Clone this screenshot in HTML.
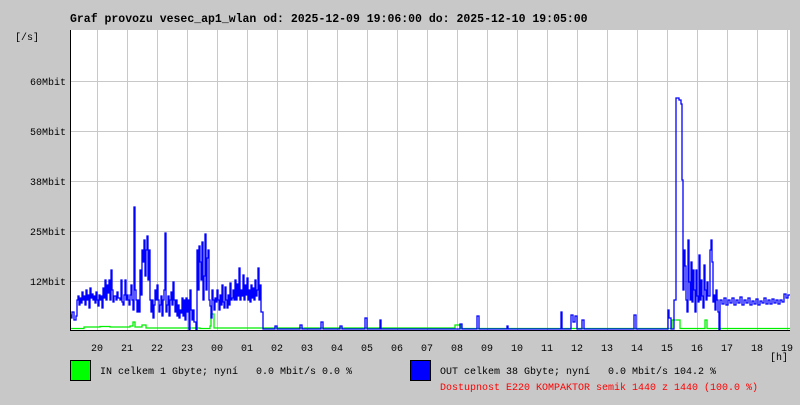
<!DOCTYPE html>
<html><head><meta charset="utf-8"><style>
html,body{margin:0;padding:0;background:#c8c8c8;}
body{width:800px;height:400px;overflow:hidden;}
svg text{font-family:"Liberation Mono",monospace;font-size:10px;fill:#000;}
</style></head><body>
<svg width="800" height="400" xmlns="http://www.w3.org/2000/svg">
<rect width="800" height="400" fill="#c8c8c8"/>
<rect x="70" y="30" width="720" height="300" fill="#fff"/>
<g stroke="#c8c8c8" stroke-width="1">
<line x1="70" y1="81.5" x2="790" y2="81.5"/><line x1="70" y1="131.5" x2="790" y2="131.5"/><line x1="70" y1="181.5" x2="790" y2="181.5"/><line x1="70" y1="231.5" x2="790" y2="231.5"/><line x1="70" y1="281.5" x2="790" y2="281.5"/>
<line x1="97.5" y1="30" x2="97.5" y2="330"/><line x1="127.5" y1="30" x2="127.5" y2="330"/><line x1="157.5" y1="30" x2="157.5" y2="330"/><line x1="187.5" y1="30" x2="187.5" y2="330"/><line x1="217.5" y1="30" x2="217.5" y2="330"/><line x1="247.5" y1="30" x2="247.5" y2="330"/><line x1="277.5" y1="30" x2="277.5" y2="330"/><line x1="307.5" y1="30" x2="307.5" y2="330"/><line x1="337.5" y1="30" x2="337.5" y2="330"/><line x1="367.5" y1="30" x2="367.5" y2="330"/><line x1="397.5" y1="30" x2="397.5" y2="330"/><line x1="427.5" y1="30" x2="427.5" y2="330"/><line x1="457.5" y1="30" x2="457.5" y2="330"/><line x1="487.5" y1="30" x2="487.5" y2="330"/><line x1="517.5" y1="30" x2="517.5" y2="330"/><line x1="547.5" y1="30" x2="547.5" y2="330"/><line x1="577.5" y1="30" x2="577.5" y2="330"/><line x1="607.5" y1="30" x2="607.5" y2="330"/><line x1="637.5" y1="30" x2="637.5" y2="330"/><line x1="667.5" y1="30" x2="667.5" y2="330"/><line x1="697.5" y1="30" x2="697.5" y2="330"/><line x1="727.5" y1="30" x2="727.5" y2="330"/><line x1="757.5" y1="30" x2="757.5" y2="330"/><line x1="787.5" y1="30" x2="787.5" y2="330"/>
</g>
<path fill="none" stroke="#00ee00" stroke-width="1.3" d="M70 328.5 H84 V327 H100 V326.5 H110 V327 H130 V326 H133 V322 H135 V327 H142 V325 H146 V328 H200 V328.5 H210 V326 H211 V314 H214 V328 H455 V325 H461 V328.5 H672 V320 H680 V328.5 H705 V320 H707 V328.5 H790"/>
<path fill="none" stroke="#0000ff" stroke-width="1.3" d="M70 315 H71 V318 H72 V312 H74 V320 H76 V316 H77 V300 H78 V296 H79 V305 H80 V298 H81 V303 H82 V292 H83 V300 H84 V296 H85 V305 H86 V290 H87 V300 H88 V295 H89 V308 H90 V288 H91 V298 H92 V294 H93 V300 H94 V296 H95 V303 H96 V292 H97 V300 H98 V306 H99 V295 H100 V300 H101 V296 H102 V308 H103 V288 H104 V298 H105 V280 H106 V300 H107 V285 H108 V293 H109 V280 H110 V300 H111 V270 H112 V290 H113 V302 H114 V296 H116 V300 H117 V292 H118 V298 H120 V300 H121 V280 H122 V302 H123 V305 H124 V295 H125 V280 H126 V300 H127 V295 H128 V300 H129 V305 H130 V295 H131 V285 H132 V300 H133 V310 H134 V207 H135 V290 H136 V300 H137 V312 H138 V300 H139 V312 H140 V270 H141 V295 H142 V250 H143 V262 H144 V240 H145 V276 H146 V250 H147 V236 H148 V280 H149 V250 H150 V300 H151 V312 H152 V300 H153 V318 H154 V305 H155 V290 H156 V300 H157 V285 H158 V300 H159 V312 H160 V305 H161 V296 H162 V316 H163 V300 H164 V290 H165 V233 H166 V312 H167 V305 H168 V296 H169 V316 H170 V300 H171 V292 H172 V305 H173 V282 H174 V300 H175 V312 H176 V300 H177 V316 H178 V305 H179 V318 H180 V310 H181 V313 H182 V298 H183 V316 H184 V300 H185 V320 H186 V298 H187 V312 H188 V300 H189 V330 H190 V290 H191 V310 H192 V320 H193 V310 H194 V322 H196 V330 H197 V250 H198 V290 H199 V246 H200 V262 H201 V280 H202 V242 H203 V300 H204 V276 H205 V234 H206 V290 H207 V258 H208 V250 H209 V300 H210 V306 H211 V318 H212 V290 H213 V300 H214 V310 H215 V298 H216 V302 H217 V290 H218 V300 H219 V310 H220 V295 H221 V305 H222 V285 H223 V302 H224 V308 H225 V287 H226 V300 H227 V308 H228 V295 H229 V305 H230 V283 H231 V300 H232 V298 H233 V290 H234 V300 H235 V280 H236 V300 H237 V284 H238 V296 H239 V268 H240 V300 H241 V290 H242 V296 H243 V275 H244 V300 H245 V285 H246 V295 H247 V278 H248 V300 H249 V290 H250 V302 H251 V285 H252 V298 H253 V288 H254 V300 H255 V280 H256 V296 H257 V290 H258 V268 H259 V300 H260 V285 H261 V312 H263 V329 H275 V326 H277 V329 H300 V325 H302 V329 H321 V322 H323 V329 H340 V326 H342 V329 H365 V318 H367 V329 H380 V320 H381 V329 H460 V324 H462 V329 H477 V316 H479 V329 H507 V326 H508 V329 H561 V312 H562 V329 H571 V315 H573 V322 H575 V316 H577 V329 H582 V320 H584 V329 H634 V315 H636 V329 H668 V310 H669 V318 H671 V329 H674 V300 H676 V98 H679 V100 H681 V104 H682 V180 H683 V290 H684 V250 H685 V266 H686 V300 H687 V312 H688 V240 H689 V282 H690 V300 H691 V262 H692 V302 H693 V270 H694 V290 H695 V312 H696 V270 H697 V296 H698 V302 H699 V255 H700 V300 H701 V280 H702 V296 H703 V308 H704 V265 H705 V290 H706 V300 H707 V282 H708 V296 H710 V250 H711 V240 H712 V262 H713 V302 H714 V295 H715 V310 H716 V290 H717 V300 H718 V312 H719 V330 H720 V300 H722 V304 H724 V298 H726 V305 H728 V300 H730 V303 H732 V298 H734 V305 H736 V300 H738 V303 H740 V297 H742 V305 H744 V300 H746 V303 H748 V298 H750 V305 H752 V301 H754 V304 H756 V299 H758 V305 H760 V301 H762 V303 H764 V298 H766 V304 H768 V300 H770 V304 H772 V299 H774 V303 H776 V300 H778 V304 H780 V300 H782 V302 H784 V294 H786 V298 H788 V295 H790"/>
<line x1="70.5" y1="30" x2="70.5" y2="331" stroke="#000"/>
<line x1="70" y1="330.5" x2="790" y2="330.5" stroke="#000"/>
<text x="70" y="22" style="font-size:11.5px;font-weight:bold">Graf provozu vesec_ap1_wlan od: 2025-12-09 19:06:00 do: 2025-12-10 19:05:00</text>
<text x="15" y="40">[/s]</text>
<g text-anchor="end">
<text x="66" y="85">60Mbit</text><text x="66" y="135">50Mbit</text><text x="66" y="185">38Mbit</text><text x="66" y="235">25Mbit</text><text x="66" y="285">12Mbit</text>
</g>
<g text-anchor="middle">
<text x="97" y="351">20</text><text x="127" y="351">21</text><text x="157" y="351">22</text><text x="187" y="351">23</text><text x="217" y="351">00</text><text x="247" y="351">01</text><text x="277" y="351">02</text><text x="307" y="351">03</text><text x="337" y="351">04</text><text x="367" y="351">05</text><text x="397" y="351">06</text><text x="427" y="351">07</text><text x="457" y="351">08</text><text x="487" y="351">09</text><text x="517" y="351">10</text><text x="547" y="351">11</text><text x="577" y="351">12</text><text x="607" y="351">13</text><text x="637" y="351">14</text><text x="667" y="351">15</text><text x="697" y="351">16</text><text x="727" y="351">17</text><text x="757" y="351">18</text><text x="787" y="351">19</text>
</g>
<text x="770" y="360">[h]</text>
<rect x="70.5" y="360.5" width="20" height="20" fill="#00ff00" stroke="#000"/>
<text x="100" y="374" xml:space="preserve">IN celkem 1 Gbyte; nyní   0.0 Mbit/s 0.0 %</text>
<rect x="410.5" y="360.5" width="20" height="20" fill="#0000ff" stroke="#000"/>
<text x="440" y="374" xml:space="preserve">OUT celkem 38 Gbyte; nyní   0.0 Mbit/s 104.2 %</text>
<text x="440" y="390" style="fill:#ff0000">Dostupnost E220 KOMPAKTOR semik 1440 z 1440 (100.0 %)</text>
</svg>
</body></html>
